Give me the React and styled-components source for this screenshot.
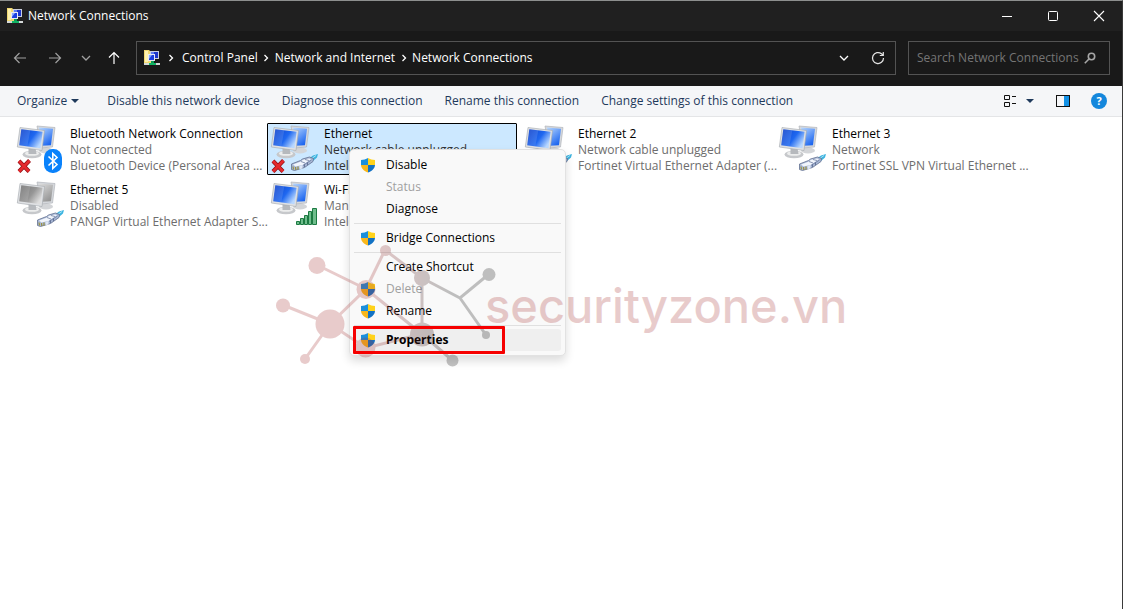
import React from 'react'

import styled, {createGlobalStyle} from 'styled-components'

const connections = [
    {name: 'Bluetooth Network Connection', status: 'Not connected', device: 'Bluetooth Device (Personal Area ...', badge: 'bluetooth', unplugged: true},
    {name: 'Ethernet', status: 'Network cable unplugged', device: 'Intel(', badge: 'cable', unplugged: true, selected: true},
    {name: 'Ethernet 2', status: 'Network cable unplugged', device: 'Fortinet Virtual Ethernet Adapter (...', badge: 'cable'},
    {name: 'Ethernet 3', status: 'Network', device: 'Fortinet SSL VPN Virtual Ethernet ...', badge: 'cable'},
    {name: 'Ethernet 5', status: 'Disabled', device: 'PANGP Virtual Ethernet Adapter S...', badge: 'cable', disabled: true},
    {name: 'Wi-Fi', status: 'Man', device: 'Intel(', badge: 'signal'},
]

const menuGroups = [
    [{label: 'Disable', shield: true}, {label: 'Status', disabled: true}, {label: 'Diagnose'}],
    [{label: 'Bridge Connections', shield: true}],
    [{label: 'Create Shortcut'}, {label: 'Delete', shield: true, disabled: true}, {label: 'Rename', shield: true}],
    [{label: 'Properties', shield: true, active: true}],
]

const commands = ['Disable this network device', 'Diagnose this connection', 'Rename this connection', 'Change settings of this connection']

const crumbs = ['Control Panel', 'Network and Internet', 'Network Connections']

const FolderIcon = () => (
    <svg width='16' height='16' viewBox='0 0 16 16'>
        <path d='M0 0h5l1 1h3v12H0z' fill='#f0d871' />
        <path d='M1 1h3v11H1z' fill='#fdf0ae' />
        <path d='M6 1h9v8H6z' fill='#c9cfdf' />
        <path d='M10 2h4v6h-4z' fill='#1b35c9' />
        <path d='M7 2h3v2H7z' fill='#5f7ff0' />
        <path d='M4 4h7v7H4z' fill='#e6e9f2' />
        <path d='M5 5h5v5H5z' fill='#1a3fe0' />
        <path d='M5 5h3L5 9z' fill='#86a8ff' />
        <path d='M7 11h3v2H7z' fill='#0b9a55' />
        <path d='M0 13h16v2H0z' fill='#d5d9d9' />
        <path d='M5 13h7v2H5z' fill='#12b566' />
    </svg>
)

const Chevron = ({down, color = '#fff'}) => (
    <svg width='10' height='10' viewBox='0 0 10 10' fill='none' stroke={color} strokeWidth='1.3'>
        <path d={down ? 'M1 3l4 4 4-4' : 'M3.5 2l3 3-3 3'} />
    </svg>
)

const Arrow = ({d, color}) => (
    <svg width='14' height='14' viewBox='0 0 14 14' fill='none' stroke={color} strokeWidth='1.2'>
        <path d={d} />
    </svg>
)

const Shield = () => (
    <svg width='16' height='16' viewBox='0 0 16 16'>
        <path d='M8 1C6 2.300 3.500 2.800 1 2.900V8h7z' fill='#1b8fdc' />
        <path d='M8 1c2 1.300 4.500 1.800 7 1.900V8H8z' fill='#ffd21a' />
        <path d='M1 8c.2 3.500 3 6 7 7.600V8z' fill='#f9b71b' />
        <path d='M15 8c-.2 3.500-3 6-7 7.600V8z' fill='#1272c4' />
    </svg>
)

const Cable = () => (
    <g>
        <path d='M40 34.500l4-3 5-1.500-1 3.500-4 3.500z' fill='#3db4e0' />
        <path d='M42 35l5-3.500' stroke='#a7e2f7' strokeWidth='1' />
        <path d='M22.500 40l9-3.500 2-1.500 7-2 4 1.500-.5 3-8.500 6-10 3-3-1z' fill='#a9b8d6' stroke='#62708f' strokeWidth='.8' />
        <path d='M24 40.500l8-3 2-1.700 6-1.300 2 .8-8.500 5.700-7 1.500z' fill='#f1f5fc' />
        <path d='M34 41.500l8.500-5.500M32 37.500l4 1.500M36 35.500l4 1' stroke='#6d7c9e' strokeWidth='.8' />
        <path d='M35.500 43v-2.500M38.500 41v-2.500' stroke='#56658a' strokeWidth='.8' />
        <path d='M24 42.500l.5 3M26.500 43l.3 3M29 42.500v3' stroke='#9b9140' strokeWidth='1.200' />
        <path d='M30.500 42l3-1v3.500l-3 .8z' fill='#dfe7f5' />
    </g>
)

const Bluetooth = () => (
    <g>
        <rect x='29' y='25' width='18' height='24' rx='8.500' fill='#0a82fb' />
        <path d='M33.500 32.500l8.500 8-4.200 4V29.500l4.200 4-8.500 8' fill='none' stroke='#fff' strokeWidth='1.600' />
    </g>
)

const Signal = () => (
    <g fill='#6fbd8c' stroke='#1c7a42' strokeWidth='1'>
        <path d='M27.500 41.500h3v3h-3zM31.500 38.500h3v6h-3zM35.500 35.500h3v9h-3zM39.500 31.500h3v13h-3zM43.500 28.500h4v16h-4z' />
    </g>
)

const badges = {cable: Cable, bluetooth: Bluetooth, signal: Signal}

const ConnectionIcon = ({id, badge, unplugged, disabled}) => {
    const Badge = badges[badge]
    const [dark, mid, light] = disabled ? ['#6f6f6f', '#969696', '#dedede'] : ['#0a3cc8', '#1f68f0', '#b9d8ff']

    return (
        <svg width='52' height='50' viewBox='0 0 52 50'>
            <defs>
                <linearGradient id={`front${id}`} x1='0' y1='0' x2='1' y2='.6'>
                    <stop offset='0' stopColor={dark} />
                    <stop offset='.6' stopColor={mid} />
                    <stop offset='1' stopColor={light} />
                </linearGradient>
                <linearGradient id={`back${id}`} x1='0' y1='0' x2='.6' y2='1'>
                    <stop offset='0' stopColor={light} />
                    <stop offset='1' stopColor={mid} />
                </linearGradient>
            </defs>
            <ellipse cx='31' cy='26.500' rx='7' ry='3' fill='#d3d5d8' />
            <path d='M22 2l18 1.500-2.500 19.500-12 1z' fill='#d5d8dc' stroke='#a9adb3' strokeWidth='.6' />
            <path d='M24 3.500l14 1.200-2 16.500-9.500.5z' fill={`url(#back${id})`} />
            <ellipse cx='17' cy='30.500' rx='9.500' ry='3.800' fill='#c6c8cb' />
            <ellipse cx='17' cy='29.500' rx='7' ry='2.300' fill='#eceded' />
            <path d='M13.500 24h7l1 6h-8z' fill='#b6b9bd' />
            <path d='M5 3.500l24.500 3L27 26.500 2.300 23z' fill='#dfe1e4' stroke='#a3a7ad' strokeWidth='.6' />
            <path d='M6.300 5.200l21.300 2.600-2.100 16.500L4.200 21.300z' fill={`url(#front${id})`} />
            <path d='M6.300 5.200l9 1.100-3 16.100-8.100-1.100z' fill='#fff' opacity='.12' />
            {unplugged && <path d='M4 37l10 10.500M14.500 36.500L4 47.500' stroke='#8f0f14' strokeWidth='4' />}
            {unplugged && <path d='M4 37l10 10.500M14.500 36.500L4 47.500' stroke='#e5292d' strokeWidth='2.600' />}
            <Badge />
        </svg>
    )
}

const nodes = [[317, 265.5, 8.5], [283, 305.5, 7], [330, 324, 14.5], [305, 359, 5], [385.5, 250.5, 5.5], [366, 289.5, 9.5], [365.5, 347.5, 10], [422, 278, 8], [422, 334.5, 12], [489, 274.5, 6.5], [486, 335, 4], [452.5, 360.5, 6]]

const Watermark = () => (
    <WatermarkRow aria-hidden='true'>
        <svg width='222' height='124' viewBox='275 244 222 124'>
            <defs>
                <linearGradient id='ink' gradientUnits='userSpaceOnUse' x1='370' y1='0' x2='450' y2='0'>
                    <stop offset='0' stopColor='#a73333' />
                    <stop offset='1' stopColor='#141414' />
                </linearGradient>
            </defs>
            <path d='M317 265l49 24M283 305l47 19 36-35 19-39 37 28v56l-56-45M305 359l25-35 36 24 56-14 30 26M422 278l38 20 29-24M460 298l26 37' fill='none' stroke='url(#ink)' strokeWidth='3' />
            {nodes.map(([cx, cy, r]) => <circle key={`${cx}-${cy}`} cx={cx} cy={cy} r={r} fill='url(#ink)' />)}
        </svg>
        <WatermarkText>securityzone.vn</WatermarkText>
    </WatermarkRow>
)

const ContextMenu = () => (
    <Menu role='menu'>
        {menuGroups.map((group) => (
            <MenuGroup key={group[0].label}>
                {group.map(({label, shield, disabled, active}) => (
                    <MenuItem key={label} role='menuitem' disabled={disabled} $active={active}>
                        <MenuIcon>{shield && <Shield />}</MenuIcon>
                        {label}
                    </MenuItem>
                ))}
            </MenuGroup>
        ))}
        <Marker />
    </Menu>
)

const App = () => (
    <>
        <GlobalStyle />
        <Window>
            <TitleBar>
                <FolderIcon />
                <Title>Network Connections</Title>
                <WindowButton aria-label='Minimize'>
                    <svg width='12' height='12'><path d='M1 6.500h10' stroke='#fff' /></svg>
                </WindowButton>
                <WindowButton aria-label='Maximize'>
                    <svg width='12' height='12'><rect x='1.500' y='1.500' width='9' height='9' rx='1' fill='none' stroke='#fff' /></svg>
                </WindowButton>
                <WindowButton aria-label='Close'>
                    <svg width='12' height='12'><path d='M1 1l10 10M11 1L1 11' stroke='#fff' strokeWidth='1.100' /></svg>
                </WindowButton>
            </TitleBar>
            <NavBar>
                <NavButton aria-label='Back'><Arrow color='#a0a0a0' d='M13 7H1.500M6.500 2l-5 5 5 5' /></NavButton>
                <NavButton aria-label='Forward'><Arrow color='#a0a0a0' d='M1 7h11.500M7.500 2l5 5-5 5' /></NavButton>
                <NavButton aria-label='Recent locations' $narrow><Chevron down color='#a0a0a0' /></NavButton>
                <NavButton aria-label='Up' $narrow><Arrow color='#fff' d='M7 13V1.500M2 6.500l5-5 5 5' /></NavButton>
                <AddressBox>
                    <FolderIcon />
                    {crumbs.map((crumb) => (
                        <React.Fragment key={crumb}>
                            <CrumbArrow><Chevron /></CrumbArrow>
                            <Crumb href='#'>{crumb}</Crumb>
                        </React.Fragment>
                    ))}
                    <AddressActions>
                        <IconButton aria-label='Previous locations'><Chevron down /></IconButton>
                        <IconButton aria-label='Refresh'>
                            <svg width='14' height='14' viewBox='0 0 14 14' fill='none' stroke='#e4e4e4' strokeWidth='1.200'>
                                <path d='M12.500 7a5.500 5.500 0 1 1-2-4.200l1.500 1.400M12.300 1v3.500H8.800' />
                            </svg>
                        </IconButton>
                    </AddressActions>
                </AddressBox>
                <SearchBox>
                    <SearchInput aria-label='Search' placeholder='Search Network Connections' />
                    <svg width='12' height='12' viewBox='0 0 12 12' fill='none' stroke='#a6a6a6' strokeWidth='1.600'>
                        <circle cx='7.500' cy='4.500' r='3.200' />
                        <path d='M5.200 6.800L.8 11.200' />
                    </svg>
                </SearchBox>
            </NavBar>
            <CommandBar>
                <OrganizeCommand>Organize <Caret /></OrganizeCommand>
                {commands.map((command) => <Command key={command}>{command}</Command>)}
                <ViewTools>
                    <IconButton aria-label='Change your view'>
                        <svg width='13' height='12' fill='none' stroke='#111'>
                            <path d='M.5.5h5v4h-5zM.5 7.500h5v4h-5zM8 1.500h4M8 8.500h4' />
                        </svg>
                    </IconButton>
                    <IconButton aria-label='More options'><Caret /></IconButton>
                    <IconButton aria-label='Preview pane' $wide>
                        <svg width='14' height='12'>
                            <rect x='8' y='1' width='5' height='10' fill='#1291e6' />
                            <rect x='.5' y='.5' width='13' height='11' fill='none' stroke='#111' />
                        </svg>
                    </IconButton>
                    <Help aria-label='Help'>?</Help>
                </ViewTools>
            </CommandBar>
            <Content>
                <Grid>
                    {connections.map((item, i) => (
                        <Connection key={item.name} $selected={item.selected}>
                            <ConnectionIcon id={i} {...item} />
                            <Details>
                                <Name>{item.name}</Name>
                                <Info $selected={item.selected}>{item.status}</Info>
                                <Info $selected={item.selected}>{item.device}</Info>
                            </Details>
                        </Connection>
                    ))}
                </Grid>
                <ContextMenu />
                <Watermark />
            </Content>
        </Window>
    </>
)

export default App

const GlobalStyle = createGlobalStyle`
* {
    box-sizing: border-box;
}

body {
    margin: 0;
    background: #2b2b2b;
    color: #000;
    font-family: 'Open Sans', 'Noto Sans', sans-serif;
    font-size: 12px;
    line-height: 16px;
}

button, input {
    font: inherit;
    color: inherit;
    border: 0;
    padding: 0;
    background: none;
}

svg {
    display: block;
    flex-shrink: 0;
}
`

const Window = styled.div`
    display: flex;
    flex-direction: column;
    min-height: 100vh;
    border-top: 1px solid #8d8f8e;
    border-right: 1px solid #3a3a3a;
    background: #fff;
`

const TitleBar = styled.header`
    display: flex;
    align-items: center;
    height: 30px;
    padding-left: 7px;
    color: #fff;
    background: #202020;
`

const Title = styled.h1`
    flex: 1;
    margin: 0 0 0 5px;
    font-size: 12px;
    font-weight: 400;
`

const WindowButton = styled.button`
    display: flex;
    align-items: center;
    justify-content: center;
    width: 46px;
    height: 30px;
`

const NavBar = styled.nav`
    display: flex;
    align-items: center;
    height: 55px;
    padding: 0 12px 2px 2px;
    color: #fff;
    background: #191919;
`

const NavButton = styled.button`
    display: flex;
    align-items: center;
    justify-content: center;
    width: ${({$narrow}) => $narrow ? '28px' : '35px'};
    height: 32px;
`

const AddressBox = styled.div`
    display: flex;
    flex: 1;
    align-items: center;
    height: 34px;
    margin: 0 12px 0 8px;
    padding-left: 7px;
    border: 1px solid #535353;
`

const CrumbArrow = styled.span`
    display: flex;
    justify-content: center;
    width: 17px;

    &:first-of-type {
        width: 22px;
    }
`

const Crumb = styled.a`
    color: #fff;
    text-decoration: none;
`

const AddressActions = styled.div`
    display: flex;
    gap: 14px;
    margin-left: auto;
    padding-right: 7px;
`

const IconButton = styled.button`
    display: flex;
    align-items: center;
    justify-content: center;
    width: ${({$wide}) => $wide ? '46px' : '20px'};
    height: 20px;
`

const SearchBox = styled.div`
    display: flex;
    align-items: center;
    width: 202px;
    height: 34px;
    padding: 0 13px 0 8px;
    border: 1px solid #535353;
`

const SearchInput = styled.input`
    flex: 1;
    min-width: 0;
    outline: none;

    &::placeholder {
        color: #757575;
        opacity: 1;
    }
`

const CommandBar = styled.div`
    display: flex;
    align-items: center;
    gap: 22px;
    height: 31px;
    padding: 0 15px 0 17px;
    border-bottom: 1px solid #e4e5e7;
    background: #f5f6f8;
`

const Command = styled.button`
    display: flex;
    align-items: center;
    gap: 4px;
    color: #1e395b;
    white-space: nowrap;
`

const OrganizeCommand = styled(Command)`
    margin-right: 6px;
`

const Caret = styled.span`
    border: 4px solid transparent;
    border-top-color: #1e395b;
    border-bottom-width: 0;
`

const ViewTools = styled.div`
    display: flex;
    align-items: center;
    margin-left: auto;
`

const Help = styled.button`
    width: 16px;
    height: 16px;
    margin-left: 5px;
    border-radius: 50%;
    color: #fff;
    background: #1487dc;
    font-size: 11px;
    font-weight: 700;
`

const Content = styled.main`
    position: relative;
    flex: 1;
    padding: 6px 0 0 13px;
`

const Grid = styled.div`
    display: grid;
    grid-template-columns: repeat(auto-fill, 250px);
    gap: 4px;
`

const Connection = styled.div`
    display: flex;
    height: 52px;
    padding-left: 1px;
    border: 1px solid ${({$selected}) => $selected ? '#000' : 'transparent'};
    border-radius: 1px;
    background: ${({$selected}) => $selected ? '#cce8ff' : 'none'};
`

const Details = styled.div`
    padding: 2px 0 0 3px;
    white-space: nowrap;
`

const Name = styled.div`
    color: #000;
`

const Info = styled.div`
    color: ${({$selected}) => $selected ? '#333' : '#6d6d6d'};
`

const Menu = styled.div`
    position: absolute;
    top: 32px;
    left: 349px;
    width: 217px;
    padding: 4px;
    border: 1px solid #e2e2e2;
    border-radius: 5px;
    background: #f9f9f9;
    box-shadow: 0 5px 10px rgba(0, 0, 0, .14);
`

const MenuGroup = styled.div`
    & + & {
        margin-top: 3px;
        padding-top: 3px;
        border-top: 1px solid #e0e0e0;
    }
`

const MenuItem = styled.button`
    display: flex;
    align-items: center;
    width: 100%;
    height: 22px;
    border-radius: 3px;
    color: ${({disabled}) => disabled ? '#a0a0a0' : '#000'};
    background: ${({$active}) => $active ? '#efefef' : 'none'};
    font-weight: ${({$active}) => $active ? 700 : 400};
`

const MenuIcon = styled.span`
    width: 32px;
    padding-left: 6px;
`

/* red frame around the last item, sits above the watermark */
const Marker = styled.div`
    position: absolute;
    bottom: 1px;
    left: 3px;
    z-index: 2;
    width: 152px;
    height: 28px;
    border: 3px solid #f60000;
    border-radius: 1px;
`

const WatermarkRow = styled.div`
    position: absolute;
    top: 127px;
    left: 275px;
    display: flex;
    align-items: center;
    opacity: .25;
    pointer-events: none;
`

const WatermarkText = styled.span`
    margin-left: -12px;
    color: #a73333;
    font-family: Inter, 'DejaVu Sans', sans-serif;
    font-size: 47px;
    font-weight: 500;
    line-height: 54px;
`
